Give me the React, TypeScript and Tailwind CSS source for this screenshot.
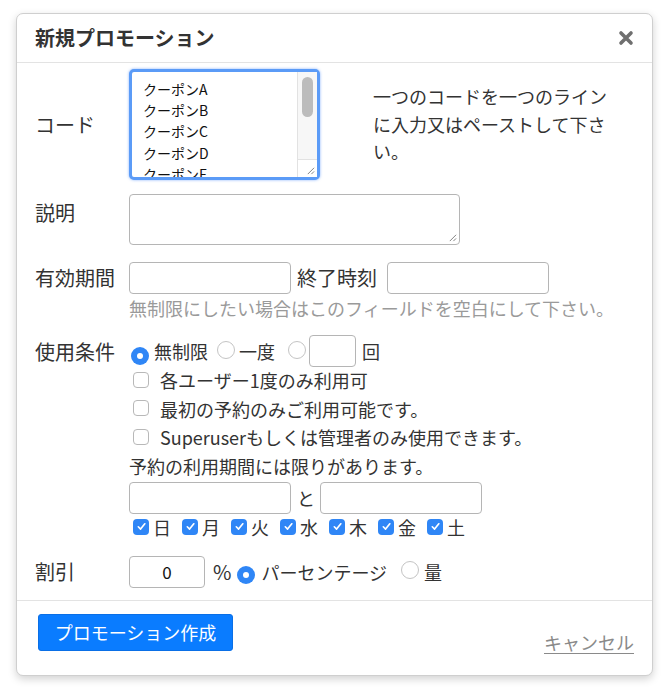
import React from "react";

const FONT = { fontFamily: '"Noto Sans CJK JP", "Noto Sans", sans-serif' };

function Radio({ checked }: { checked?: boolean }) {
  return checked ? (
    <span className="inline-flex h-[18px] w-[18px] shrink-0 items-center justify-center rounded-full bg-[#2f86f6]">
      <span className="h-[6px] w-[6px] rounded-full bg-white" />
    </span>
  ) : (
    <span className="inline-block h-[18px] w-[18px] shrink-0 rounded-full border border-[#c4c4c4] bg-white" />
  );
}

function Check({ checked }: { checked?: boolean }) {
  return checked ? (
    <span className="inline-flex h-[16px] w-[16px] shrink-0 items-center justify-center rounded-[4px] bg-[#2f86f6]">
      <svg viewBox="0 0 12 12" className="h-[11px] w-[11px]">
        <path d="M2.5 6.3 L5 8.8 L9.6 3" fill="none" stroke="white" strokeWidth="1.8" strokeLinecap="round" strokeLinejoin="round" />
      </svg>
    </span>
  ) : (
    <span className="inline-block h-[16px] w-[16px] shrink-0 rounded-[4px] border border-[#b8b8b8] bg-white" />
  );
}

function Grip() {
  return (
    <svg viewBox="0 0 10 10" className="absolute bottom-[2px] right-[2px] h-[9px] w-[9px]">
      <path d="M9 2 L2 9 M9 6 L6 9" stroke="#777" strokeWidth="1" />
    </svg>
  );
}

const box = "h-[32px] rounded-[4px] border border-[#b5b5b5] bg-white";

export default function App() {
  const days = ["日", "月", "火", "水", "木", "金", "土"];
  return (
    <div className="min-h-[689px] bg-white pl-[16px] pt-[13px] text-[#333]" style={FONT}>
      <div className="w-[637px] rounded-[7px] border border-[#cfcfcf] bg-white shadow-[0_3px_8px_rgba(0,0,0,0.18)]">
        {/* header */}
        <div className="flex h-[49px] items-center justify-between border-b border-[#e3e3e3] pl-[18px] pr-[18px]">
          <h1 className="text-[20px] font-bold leading-none text-[#333]">新規プロモーション</h1>
          <svg viewBox="0 0 16 16" className="h-[16px] w-[16px]">
            <path d="M3 3 L13 13 M13 3 L3 13" stroke="#6f6f6f" strokeWidth="3.6" strokeLinecap="round" />
          </svg>
        </div>

        {/* body */}
        <div className="pl-[18px] pr-[18px] pt-[6px]">
          {/* code */}
          <div className="flex items-center">
            <div className="w-[94px] text-[20px] leading-none">コード</div>
            <div className="relative h-[111px] w-[191px] rounded-[5px] border-[3px] border-[#5b9bf7] bg-white shadow-[0_0_3px_rgba(60,130,250,0.6)]">
              <div className="overflow-hidden pl-[11px] pt-[7px] text-[14px] leading-[21.2px] text-[#111]" style={{ height: 105 }}>
                <div>クーポンA</div>
                <div>クーポンB</div>
                <div>クーポンC</div>
                <div>クーポンD</div>
                <div>クーポンE</div>
              </div>
              <div className="absolute right-0 top-0 h-full w-[20px] border-l border-[#e2e2e2] bg-[#f7f7f7]">
                <div className="ml-[4px] mt-[5px] h-[40px] w-[11px] rounded-full bg-[#bcbcbc]" />
                <div className="absolute bottom-0 left-0 h-[18px] w-full border-t border-[#e2e2e2] bg-white" />
              </div>
              <Grip />
            </div>
            <p className="ml-[53px] w-[240px] text-[18px] leading-[27.5px] text-[#333]">
              一つのコードを一つのラインに入力又はペーストして下さい。
            </p>
          </div>

          {/* description */}
          <div className="mt-[14px] flex items-start">
            <div className="w-[94px] pt-[8px] text-[20px] leading-[22px]">説明</div>
            <div className="relative h-[51px] w-[331px] rounded-[4px] border border-[#b5b5b5] bg-white">
              <Grip />
            </div>
          </div>

          {/* period */}
          <div className="mt-[17px] flex items-center">
            <div className="w-[94px] text-[20px] leading-none">有効期間</div>
            <div className={`${box} w-[162px]`} />
            <span className="ml-[6px] mr-[10px] text-[20px] leading-none">終了時刻</span>
            <div className={`${box} w-[162px]`} />
          </div>
          <p className="ml-[94px] mt-[2px] text-[18px] leading-[24px] text-[#9a9a9a]">
            無制限にしたい場合はこのフィールドを空白にして下さい。
          </p>

          {/* conditions */}
          <div className="mt-[15px] flex items-start">
            <div className="w-[94px] pt-[6px] text-[20px] leading-[22px]">使用条件</div>
            <div className="flex flex-col text-[18px]">
              <div className="flex h-[32px] items-center">
                <span className="ml-[2px]"><Radio checked /></span>
                <span className="ml-[5px] leading-none">無制限</span>
                <span className="ml-[9px]"><Radio /></span>
                <span className="ml-[4px] leading-none">一度</span>
                <span className="ml-[13px]"><Radio /></span>
                <div className={`${box} ml-[3px] w-[47px]`} />
                <span className="ml-[6px] leading-none">回</span>
              </div>
              <div className="mt-[-1px] flex flex-col">
                {["各ユーザー1度のみ利用可", "最初の予約のみご利用可能です。", "Superuserもしくは管理者のみ使用できます。"].map((t) => (
                  <div key={t} className="flex h-[28.5px] items-center">
                    <span className="ml-[4px]"><Check /></span>
                    <span className="ml-[11px] leading-none">{t}</span>
                  </div>
                ))}
              </div>
              <div className="flex h-[29px] items-center leading-none">予約の利用期間には限りがあります。</div>
              <div className="mt-[1px] flex items-center">
                <div className={`${box} w-[162px]`} />
                <span className="ml-[6px] mr-[5px] leading-none">と</span>
                <div className={`${box} w-[162px]`} />
              </div>
              <div className="flex h-[26px] items-center">
                {days.map((d) => (
                  <div key={d} className="ml-[4px] mr-[7px] flex items-center">
                    <Check checked />
                    <span className="ml-[4px] leading-none">{d}</span>
                  </div>
                ))}
              </div>
            </div>
          </div>

          {/* discount */}
          <div className="mt-[16px] flex items-center pb-[12px]">
            <div className="w-[94px] text-[20px] leading-none">割引</div>
            <div className={`${box} flex w-[76px] items-center justify-center text-[17px] text-[#111]`}>0</div>
            <span className="ml-[8px] text-[20px] leading-none">%</span>
            <span className="ml-[6px]"><Radio checked /></span>
            <span className="ml-[6px] text-[18px] leading-none">パーセンテージ</span>
            <span className="ml-[14px]"><Radio /></span>
            <span className="ml-[5px] text-[18px] leading-none">量</span>
          </div>
        </div>

        {/* footer */}
        <div className="flex items-start justify-between border-t border-[#e3e3e3] pb-[21px] pl-[21px] pr-[18px] pt-[13px]">
          <button className="h-[37px] w-[195px] rounded-[3px] border border-[#0a6fe6] bg-[#0a7cff] text-[18px] leading-none text-white">
            プロモーション作成
          </button>
          <a href="#" className="mt-[16px] text-[18px] leading-[24px] text-[#8a8a8a] underline underline-offset-[3px]">
            キャンセル
          </a>
        </div>
      </div>
    </div>
  );
}
